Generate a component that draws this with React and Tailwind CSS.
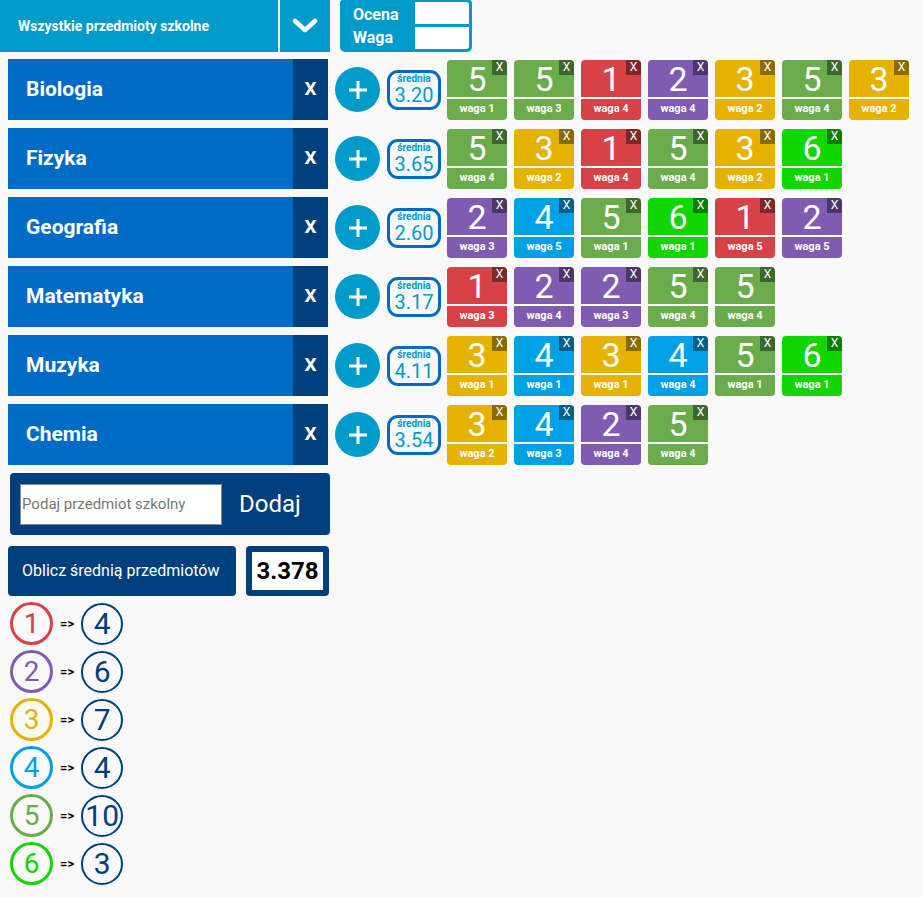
import React, { useState } from 'react';

const gradeColors = {
  1: 'bg-[#d64246]',
  2: 'bg-[#7f5cb2]',
  3: 'bg-[#e6b200]',
  4: 'bg-[#00a0e4]',
  5: 'bg-[#6aac4c]',
  6: 'bg-[#12d600]',
};

const ringColors = {
  1: 'border-[#d64246] text-[#d64246]',
  2: 'border-[#7f5cb2] text-[#7f5cb2]',
  3: 'border-[#e6b200] text-[#e6b200]',
  4: 'border-[#00a0e4] text-[#00a0e4]',
  5: 'border-[#6aac4c] text-[#6aac4c]',
  6: 'border-[#12d600] text-[#12d600]',
};

const subjects = [
  { name: 'Biologia', avg: '3.20', grades: [[5, 1], [5, 3], [1, 4], [2, 4], [3, 2], [5, 4], [3, 2]] },
  { name: 'Fizyka', avg: '3.65', grades: [[5, 4], [3, 2], [1, 4], [5, 4], [3, 2], [6, 1]] },
  { name: 'Geografia', avg: '2.60', grades: [[2, 3], [4, 5], [5, 1], [6, 1], [1, 5], [2, 5]] },
  { name: 'Matematyka', avg: '3.17', grades: [[1, 3], [2, 4], [2, 3], [5, 4], [5, 4]] },
  { name: 'Muzyka', avg: '4.11', grades: [[3, 1], [4, 1], [3, 1], [4, 4], [5, 1], [6, 1]] },
  { name: 'Chemia', avg: '3.54', grades: [[3, 2], [4, 3], [2, 4], [5, 4]] },
];

const counts = [[1, 4], [2, 6], [3, 7], [4, 4], [5, 10], [6, 3]];

const Grade = ({ value, weight }) => (
  <div className={`relative w-[60px] h-[60px] rounded-[4px] overflow-hidden flex flex-col ${gradeColors[value]}`}>
    <div className="h-[37px] flex items-center justify-center text-white text-[34px] leading-none pt-[2px]">
      {value}
    </div>
    <div className="h-[2px] bg-white" />
    <div className="flex-1 flex items-center justify-center text-white text-[11px] font-bold">
      waga {weight}
    </div>
    <div className="absolute top-0 right-0 w-[15px] h-[15px] bg-black/40 text-white text-[12px] leading-[15px] text-center">
      X
    </div>
  </div>
);

const App = () => {
  const [name, setName] = useState('');

  return (
    <div className="min-h-[897px] bg-[#f9f9f9] font-['Roboto',sans-serif]">
      {/* Header */}
      <div className="flex items-start">
        <div className="w-[278px] h-[52px] bg-[#009bcb] flex items-center pl-[18px] text-white text-[14px] font-bold">
          Wszystkie przedmioty szkolne
        </div>
        <div className="w-[50px] h-[52px] ml-[2px] bg-[#009bcb] flex items-center justify-center">
          <svg width="26" height="16" viewBox="0 0 26 16">
            <path d="M3 3 L13 12 L23 3" fill="none" stroke="white" strokeWidth="4.5" strokeLinecap="round" strokeLinejoin="round" />
          </svg>
        </div>
        <div className="ml-[10px] w-[132px] h-[52px] bg-[#009bcb] rounded-b-[5px] rounded-t-[3px] flex">
          <div className="w-[75px] flex flex-col justify-center pl-[13px] text-white text-[16px] font-bold leading-[23px]">
            <span>Ocena</span>
            <span>Waga</span>
          </div>
          <div className="flex flex-col gap-[3px] pt-[2px]">
            <div className="w-[54px] h-[22px] bg-white rounded-tr-[3px]" />
            <div className="w-[54px] h-[22px] bg-white rounded-br-[3px]" />
          </div>
        </div>
      </div>

      {/* Subjects */}
      <div className="flex flex-col gap-[8px] mt-[7px]">
        {subjects.map((s) => (
          <div key={s.name} className="flex items-center">
            <div className="ml-[8px] w-[320px] h-[61px] flex">
              <div className="flex-1 bg-[#006bc6] flex items-center pl-[18px] text-white text-[21px] font-bold">
                {s.name}
              </div>
              <div className="w-[35px] bg-[#003f7d] flex items-center justify-center text-white text-[19px] font-bold">
                X
              </div>
            </div>
            <div className="ml-[7px] w-[45px] h-[45px] rounded-full bg-[#009bcb] flex items-center justify-center">
              <svg width="22" height="22" viewBox="0 0 22 22">
                <path d="M11 2 V20 M2 11 H20" stroke="white" strokeWidth="3" />
              </svg>
            </div>
            <div className="ml-[7px] w-[54px] h-[40px] border-[3px] border-[#006bc6] rounded-[11px] flex flex-col items-center justify-center gap-[1px] text-[#009bcb]">
              <span className="text-[10px] leading-[10px] font-bold">średnia</span>
              <span className="text-[20px] leading-[20px]">{s.avg}</span>
            </div>
            <div className="ml-[6px] flex gap-[7px]">
              {s.grades.map(([v, w], i) => (
                <Grade key={i} value={v} weight={w} />
              ))}
            </div>
          </div>
        ))}
      </div>

      {/* Add subject */}
      <div className="ml-[10px] mt-[8px] w-[320px] h-[62px] bg-[#003f7d] rounded-[4px] flex items-center">
        <input
          value={name}
          onChange={(e) => setName(e.target.value)}
          placeholder="Podaj przedmiot szkolny"
          className="ml-[10px] w-[202px] h-[41px] bg-white border border-[#888] px-[1px] text-[15px] text-black placeholder:text-[#777] outline-none"
        />
        <button className="ml-[17px] text-white text-[24px]">Dodaj</button>
      </div>

      {/* Average */}
      <div className="flex ml-[8px] mt-[11px] gap-[10px]">
        <button className="w-[228px] h-[50px] bg-[#003f7d] rounded-[4px] text-white text-[16px] text-left pl-[14px]">
          Oblicz średnią przedmiotów
        </button>
        <div className="w-[83px] h-[50px] bg-[#003f7d] rounded-[4px] flex items-center justify-center">
          <div className="w-[71px] h-[38px] bg-white flex items-center justify-center text-black text-[24px] font-bold">
            3.378
          </div>
        </div>
      </div>

      {/* Counts */}
      <div className="flex flex-col gap-[5px] mt-[6px] ml-[10px]">
        {counts.map(([g, c]) => (
          <div key={g} className="flex items-center">
            <div className={`w-[43px] h-[43px] rounded-full border-[3px] flex items-center justify-center text-[28px] ${ringColors[g]}`}>
              {g}
            </div>
            <span className="ml-[7px] text-[13px] font-bold text-black">=&gt;</span>
            <div className="ml-[7px] w-[42px] h-[42px] rounded-full border-2 border-[#003f7d] text-[#003f7d] flex items-center justify-center text-[30px]">
              {c}
            </div>
          </div>
        ))}
      </div>
    </div>
  );
};

export default App;
